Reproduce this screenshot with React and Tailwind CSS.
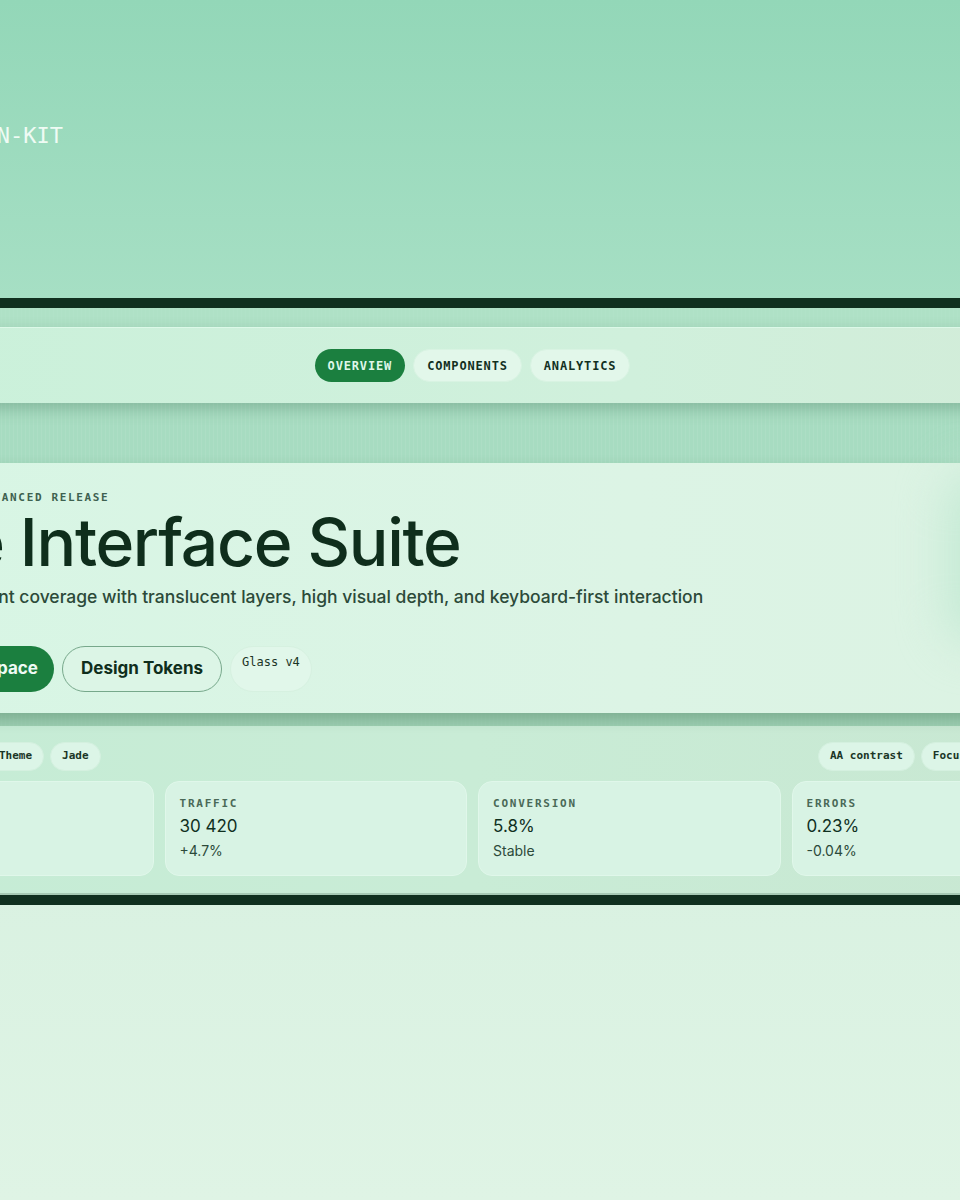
import React from 'react';

const mono = "font-['DejaVu_Sans_Mono','Liberation_Mono',monospace]";
const sans = "font-['Inter','Liberation_Sans',sans-serif]";

const tabs = [
    { label: 'OVERVIEW', active: true },
    { label: 'COMPONENTS', active: false },
    { label: 'ANALYTICS', active: false },
];

const kpis = [
    { label: 'SESSIONS', value: '12 840', delta: '+2.1%' },
    { label: 'TRAFFIC', value: '30 420', delta: '+4.7%' },
    { label: 'CONVERSION', value: '5.8%', delta: 'Stable' },
    { label: 'ERRORS', value: '0.23%', delta: '-0.04%' },
];

const Chip = ({ children }) => (
    <span
        className={`${mono} flex h-[29px] items-center rounded-full border border-[#d4f0df] bg-[#dcf5e7] px-[11px] text-[11px] font-bold text-[#1a3526]`}
    >
        {children}
    </span>
);

const App = () => {
    return (
        <div className="min-h-[1200px] w-full overflow-hidden bg-[linear-gradient(180deg,#c9ebd7_0%,#dff4e5_100%)]">
            <div className="flex w-[945px] flex-col items-center">
                {/* header band */}
                <header className="flex h-[298px] w-[1600px] justify-center bg-[linear-gradient(180deg,#93d7b8_0%,#a6dfc4_100%)]">
                    <div className="w-[1243px] pt-[124px]">
                        <p className={`${mono} text-[22px] leading-6 text-[#effbf4]`}>GLASS DESIGN-KIT</p>
                    </div>
                </header>

                {/* framed section */}
                <section className="flex w-[1600px] flex-col border-y-[10px] border-[#10301f] bg-[#a7dcc1] bg-[repeating-linear-gradient(90deg,rgba(255,255,255,0.07)_0_1px,transparent_1px_4px)]">
                    <div className="h-[19px] bg-[#b4e4ca]/60" />

                    {/* nav */}
                    <nav className="flex h-[76px] items-center justify-center gap-2 border-t border-[#dcf9e8] bg-[linear-gradient(90deg,#c9f1da_0%,#d0f0dc_60%,#d3ead7_100%)] shadow-[0_6px_14px_rgba(30,80,50,0.25)]">
                        {tabs.map((t) => (
                            <button
                                key={t.label}
                                type="button"
                                className={`${mono} h-[33px] rounded-full px-[13px] text-[12px] font-bold tracking-[0.07em] ${
                                    t.active
                                        ? 'bg-[#1b7f3f] text-[#dff7e9]'
                                        : 'border border-[#d8f3e2] bg-[#e2f7ea] text-[#12301f]'
                                }`}
                            >
                                {t.label}
                            </button>
                        ))}
                    </nav>

                    <div className="h-[60px]" />

                    {/* hero */}
                    <div className="relative flex h-[250px] justify-center bg-[linear-gradient(90deg,#d6f6e4_0%,#dcf4e5_60%,#dcf2e2_100%)] shadow-[0_6px_12px_rgba(30,80,50,0.25)]">
                        <div className="pointer-events-none absolute left-[1275px] top-[10px] h-[170px] w-[70px] rounded-full bg-[#c2e9d3] blur-xl" />
                        <div className="relative w-[1243px] pl-[35px] pt-[27px]">
                            <p className={`${mono} text-[11px] font-bold leading-4 tracking-[0.15em] text-[#3e6150]`}>
                                JADE KIT · ADVANCED RELEASE
                            </p>
                            <h1 className={`${sans} text-[66px] font-medium leading-[72px] tracking-[-0.02em] text-[#0f2e1c]`}>
                                The Interface Suite
                            </h1>
                            <p className={`${sans} mt-[7px] text-[17.5px] font-medium leading-6 text-[#2c4a39]`}>
                                Full component coverage with translucent layers, high visual depth, and keyboard-first interaction
                            </p>
                            <div className="mt-[37px] flex items-start gap-2">
                                <button
                                    type="button"
                                    className={`${sans} h-[46px] rounded-full bg-[#1b7f3f] px-[16px] text-[17px] font-bold text-[#effbf4]`}
                                >
                                    New Workspace
                                </button>
                                <button
                                    type="button"
                                    className={`${sans} h-[46px] rounded-full border border-[#77a88b] bg-[#dcf5e6] px-[18px] text-[17px] font-bold text-[#0f2e1c]`}
                                >
                                    Design Tokens
                                </button>
                                <span
                                    className={`${mono} h-[46px] rounded-full border border-[#d6f1e0] bg-[#e1f7ea] px-[11px] pt-[6px] text-[12px] text-[#1b3526]`}
                                >
                                    Glass v4
                                </span>
                            </div>
                        </div>
                    </div>

                    <div className="h-[13px] bg-[#94c4a7]/60" />

                    {/* metrics panel */}
                    <div className="flex h-[167px] justify-center bg-[linear-gradient(90deg,#c4ecd5_0%,#c9ecd6_50%,#c8e6d1_100%)]">
                        <div className="w-[1243px] pt-[16px]">
                            <div className="flex justify-between">
                                <div className="flex gap-[6px]">
                                    <Chip>Glass v4.2</Chip>
                                    <Chip>Light Theme</Chip>
                                    <Chip>Jade</Chip>
                                </div>
                                <div className="flex gap-[6px]">
                                    <Chip>AA contrast</Chip>
                                    <Chip>Focus ring</Chip>
                                    <Chip>Keyboard</Chip>
                                </div>
                            </div>
                            <div className="mt-[10px] grid grid-cols-4 gap-[11px]">
                                {kpis.map((k) => (
                                    <div
                                        key={k.label}
                                        className="h-[95px] rounded-[14px] border border-[#e0f7ea] bg-[#d9f4e5]/90 px-[14px] pt-[14px]"
                                    >
                                        <p className={`${mono} text-[11px] font-bold leading-4 tracking-[0.16em] text-[#4a6957]`}>
                                            {k.label}
                                        </p>
                                        <p className={`${sans} mt-[2px] text-[17px] leading-6 text-[#10301f]`}>{k.value}</p>
                                        <p className={`${sans} mt-[3px] text-[14px] leading-5 text-[#2c4a3a]`}>{k.delta}</p>
                                    </div>
                                ))}
                            </div>
                        </div>
                    </div>
                    <div className="h-[2px] bg-[#a6c9b4]" />
                </section>
            </div>
        </div>
    );
};

export default App;
